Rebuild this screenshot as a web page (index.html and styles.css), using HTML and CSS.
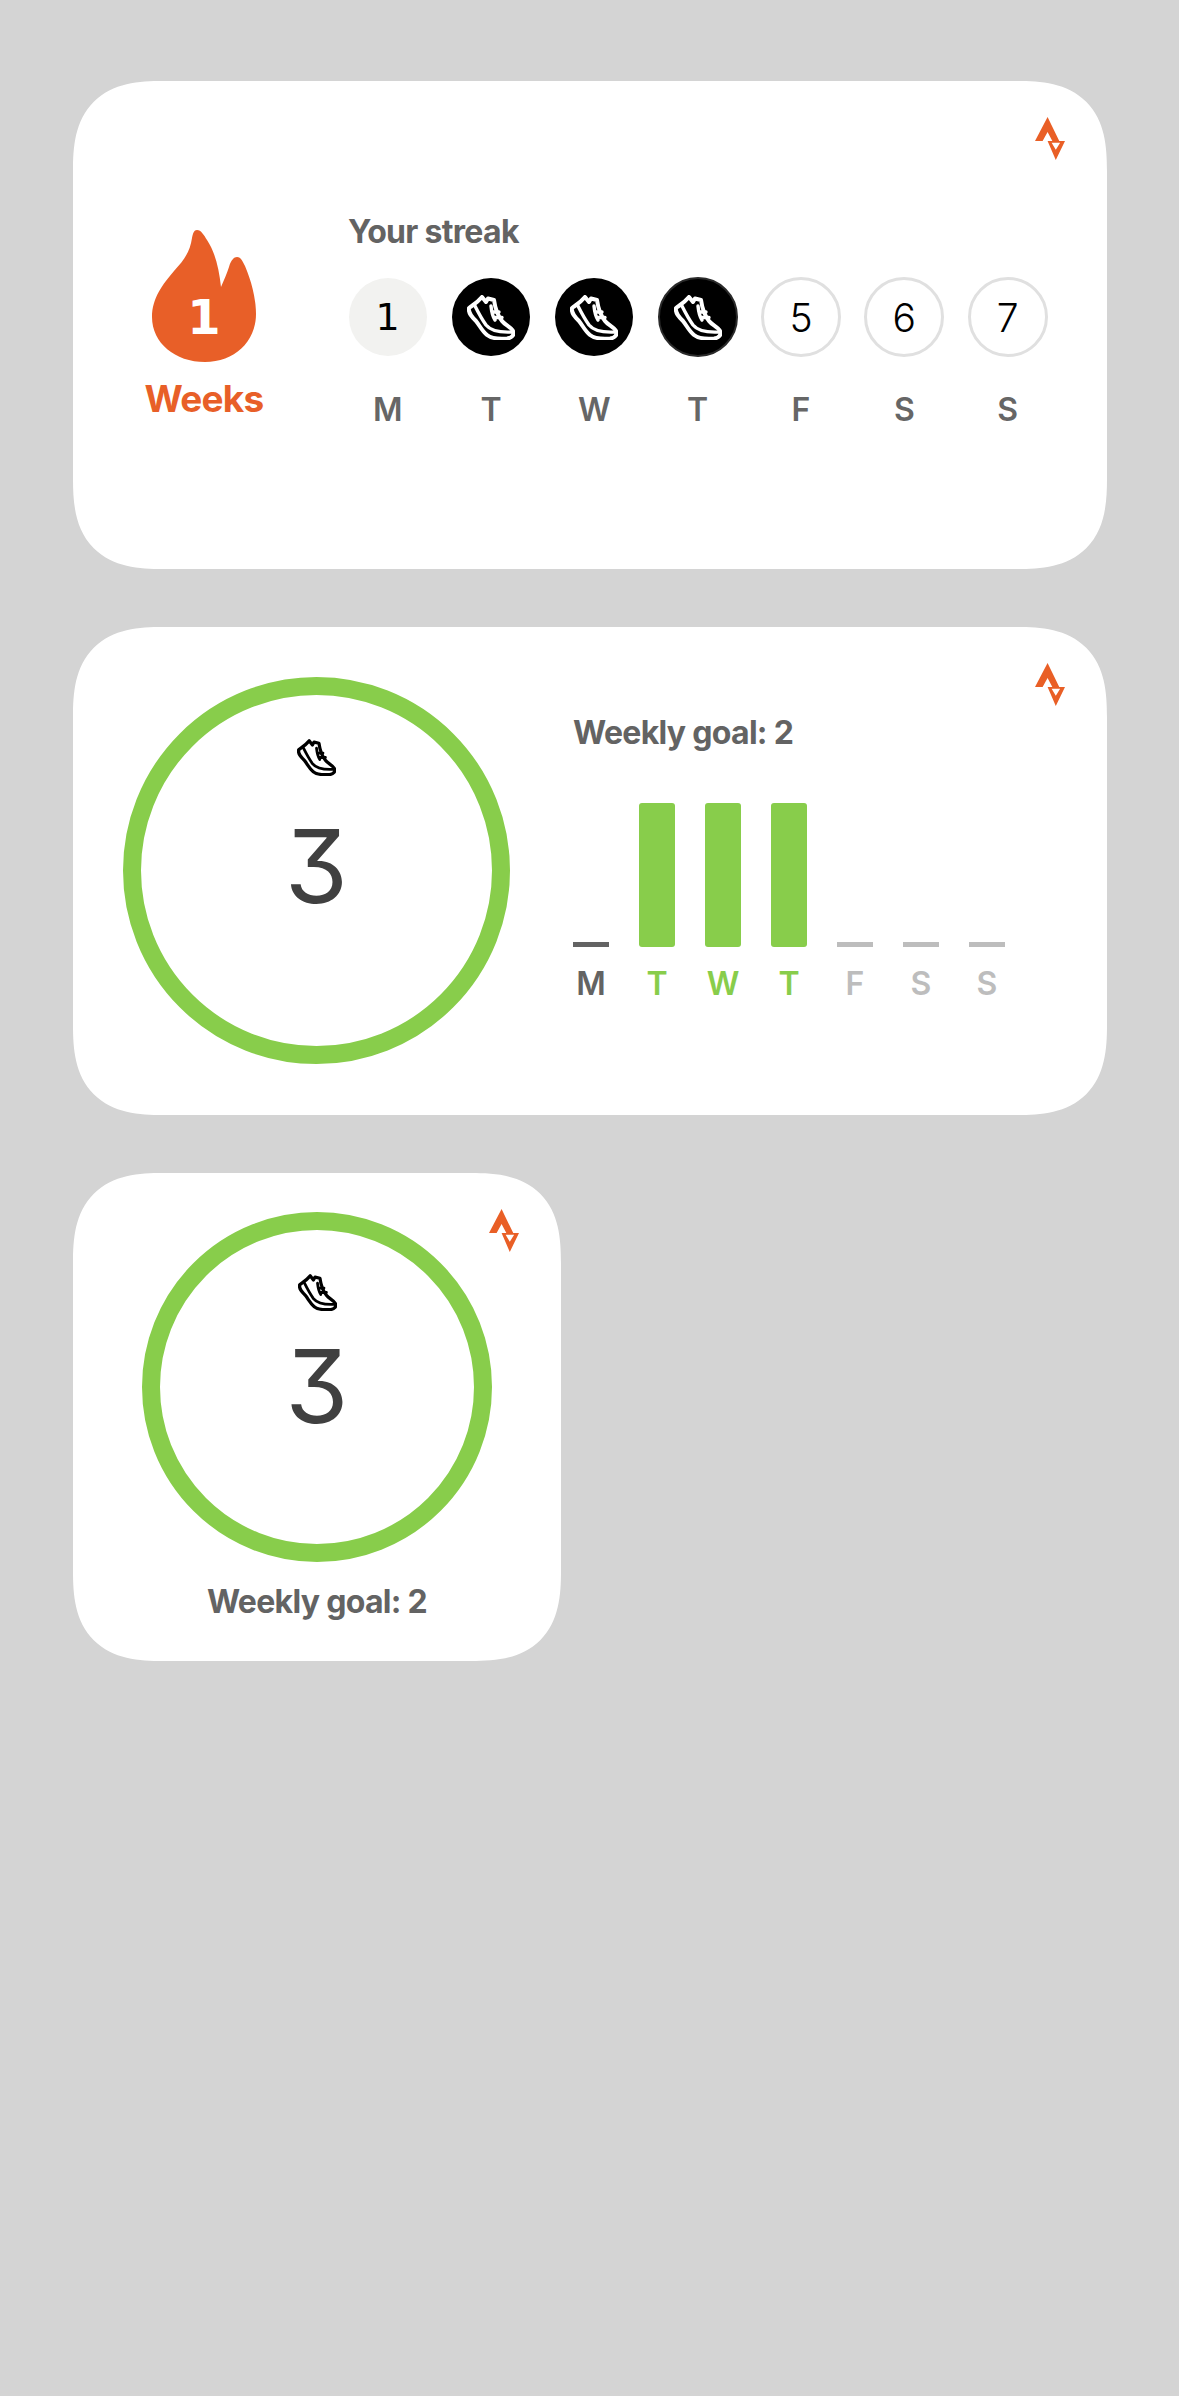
FILE: index.html
```html
<!DOCTYPE html>
<html>
<head lang="en">
    <meta charset="UTF-8">
    <title>Streak widgets</title>
    <link rel="stylesheet" href="styles.css">
</head>
<body>
<svg class="defs" width="0" height="0">
    <symbol id="shoe" viewBox="0 0 48 45">
        <path d="M2 13 C6 10 10 8 15 2 L19 7 L21 3.500 L27 5 C28 12 31 21 35 26 C38 30 44 32 46 36 C47.500 40 45 43 40 43.500 C33 44 25 44 20 40 C15 36 13 31 9 26 C5 22 1 18 2 13 Z" fill="none" stroke="currentColor" stroke-width="4" stroke-linejoin="round"/>
        <path d="M8 11 C11 17 14 23 19 30 C23 35 30 38 46 37 M24 11 C24.500 16 26 22 28 25 M25.500 17 L32 17 M27.500 22.500 L35 22.500" fill="none" stroke="currentColor" stroke-width="3.400" stroke-linecap="round"/>
    </symbol>
    <symbol id="logo" viewBox="0 0 30.300 43.300">
        <path d="M12.700 0 L0 24.300 L7.700 24.300 L12.700 15 L17.500 24.300 L12.700 24.300 L21 43.300 L30.300 24.300 L24.500 24.300 Z M16.800 26 L25.400 26 L21 33 Z" fill-rule="evenodd"/>
    </symbol>
</svg>

<div class="card">
    <svg class="logo"><use href="#logo"/></svg>
    <div class="streak-badge">
        <div class="flame">
            <svg width="104" height="132" viewBox="0 0 104 132"><path d="M45 0 C49 0 52 5 55 10 C63 22 67 38 69 57 C72 50 75 43 77 37 C79 30 82 27 85 27 C89 27 91 32 93 36 C99 50 104 68 104 84 C104 112 82 132 53 132 C23 132 0 113 0 87 C0 68 11 54 22 41 C32 30 38 22 40 8 C41 3 42 0 45 0 Z"/></svg>
            <span class="flame-num">1</span>
        </div>
        <div class="weeks">Weeks</div>
    </div>
    <div class="streak">
        <div class="title streak-title">Your streak</div>
        <div class="week">
            <div class="day today">1</div>
            <div class="day done"><svg class="shoe"><use href="#shoe"/></svg></div>
            <div class="day done"><svg class="shoe"><use href="#shoe"/></svg></div>
            <div class="day done last"><svg class="shoe"><use href="#shoe"/></svg></div>
            <div class="day">5</div>
            <div class="day">6</div>
            <div class="day">7</div>
            <div class="letter">M</div>
            <div class="letter">T</div>
            <div class="letter">W</div>
            <div class="letter">T</div>
            <div class="letter">F</div>
            <div class="letter">S</div>
            <div class="letter">S</div>
        </div>
    </div>
</div>

<div class="card goal-card">
    <svg class="logo"><use href="#logo"/></svg>
    <div class="ring">
        <svg class="ring-shoe"><use href="#shoe"/></svg>
        <div class="ring-num">3</div>
    </div>
    <div class="goal">
        <div class="title">Weekly goal: 2</div>
        <div class="bars">
            <div class="col"><div class="bar now"></div><div class="letter now-text">M</div></div>
            <div class="col"><div class="bar full"></div><div class="letter green">T</div></div>
            <div class="col"><div class="bar full"></div><div class="letter green">W</div></div>
            <div class="col"><div class="bar full"></div><div class="letter green">T</div></div>
            <div class="col"><div class="bar"></div><div class="letter grey">F</div></div>
            <div class="col"><div class="bar"></div><div class="letter grey">S</div></div>
            <div class="col"><div class="bar"></div><div class="letter grey">S</div></div>
        </div>
    </div>
</div>

<div class="card small">
    <svg class="logo"><use href="#logo"/></svg>
    <div class="ring">
        <svg class="ring-shoe"><use href="#shoe"/></svg>
        <div class="ring-num">3</div>
    </div>
    <div class="title small-title">Weekly goal: 2</div>
</div>
</body>
</html>
```

FILE: styles.css
```css
*{
    margin: 0;
    padding: 0;
    box-sizing: border-box;
}
body{
    background: #d4d4d4;
    padding: 81px 73px;
    font-family: Inter, "Liberation Sans", sans-serif;
}
.defs{
    position: absolute;
}
.card{
    position: relative;
    display: flex;
    width: 1034px;
    height: 488px;
    margin-bottom: 58px;
    background: white;
    border-radius: 90px;
    corner-shape: superellipse(1.4);
}
.logo{
    position: absolute;
    top: 36px;
    right: 42px;
    width: 30px;
    height: 43px;
    fill: #e95f26;
}
.title{
    font-size: 32px;
    line-height: 40px;
    font-weight: 700;
    letter-spacing: -0.7px;
    color: #636363;
}

/* streak */
.streak-badge{
    width: 262px;
    padding-top: 149px;
    display: flex;
    flex-direction: column;
    align-items: center;
}
.flame{
    display: grid;
    justify-items: center;
    align-items: center;
}
.flame svg{
    grid-area: 1/1;
    fill: #e85f28;
    display: block;
}
.flame-num{
    grid-area: 1/1;
    margin-top: 42px;
    font-family: "DejaVu Sans", sans-serif;
    font-size: 48px;
    font-weight: 700;
    color: white;
}
.weeks{
    margin-top: 14px;
    font-size: 37px;
    line-height: 46px;
    font-weight: 700;
    letter-spacing: -0.8px;
    color: #e85f28;
}
.streak{
    padding-top: 131px;
    margin-left: 1px;
}
.streak-title{
    padding-left: 12px;
    margin-bottom: 25px;
}
.week{
    display: grid;
    grid-template-columns: repeat(7, 103.33px);
    grid-template-rows: 80px 40px;
    row-gap: 33px;
    justify-items: center;
    align-items: center;
}
.day{
    width: 80px;
    height: 80px;
    border: 3px solid #e0e0e0;
    border-radius: 50%;
    display: flex;
    justify-content: center;
    align-items: center;
    font-size: 39px;
    font-weight: 350;
    color: black;
}
.today{
    width: 78px;
    height: 78px;
    border: 0;
    background: #f2f2f0;
    font-family: "DejaVu Sans", sans-serif;
    font-size: 38px;
    font-weight: 400;
}
.done{
    width: 78px;
    height: 78px;
    border: 0;
    background: black;
    color: white;
}
.done.last{
    width: 80px;
    height: 80px;
    border: 2px solid #2a2a2a;
}
.shoe{
    width: 48px;
    height: 45px;
}
.letter{
    font-size: 32px;
    line-height: 40px;
    font-weight: 600;
    text-align: center;
    color: #666666;
}

/* ring */
.ring{
    display: flex;
    flex-direction: column;
    align-items: center;
    flex-shrink: 0;
    width: 387px;
    height: 387px;
    padding-top: 44px;
    border: 18px solid #88cd4b;
    border-radius: 50%;
}
.ring-shoe{
    width: 39px;
    height: 37px;
    color: black;
}
.ring-num{
    margin-top: 53px;
    font-size: 102px;
    line-height: 74px;
    font-weight: 400;
    color: #404040;
    font-feature-settings: "cv09";
}

/* goal card */
.goal-card{
    padding: 50px 0 0 50px;
}
.goal{
    margin-left: 63px;
    padding-top: 36px;
}
.bars{
    display: flex;
    gap: 30px;
    margin-top: 50px;
}
.col{
    display: flex;
    flex-direction: column;
    justify-content: flex-end;
    width: 36px;
    height: 201px;
}
.bar{
    height: 5px;
    margin-bottom: 17px;
    background: #bdbdbd;
}
.bar.now{
    background: #636363;
}
.bar.full{
    height: 144px;
    border-radius: 3px;
    background: #88cd4b;
}
.now-text{
    color: #636363;
}
.green{
    color: #88cd4b;
}
.grey{
    color: #bdbdbd;
}

/* small card */
.small{
    width: 488px;
    padding-top: 39px;
    flex-direction: column;
    align-items: center;
}
.small .ring{
    width: 350px;
    height: 350px;
    padding-top: 44px;
}
.small .ring-num{
    margin-top: 38px;
}
.small-title{
    margin-top: 20px;
}
```
